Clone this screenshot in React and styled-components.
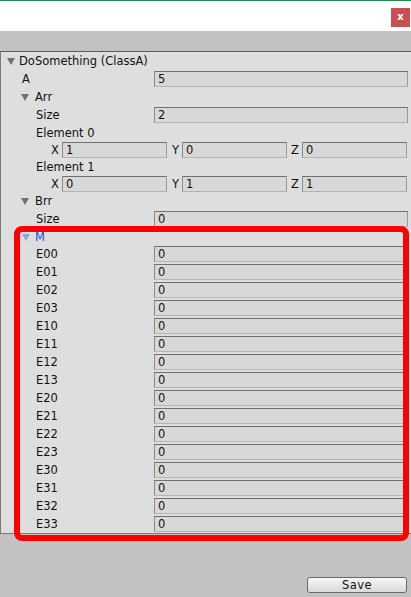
import React from 'react';
import styled, { createGlobalStyle } from 'styled-components';

const GlobalStyle = createGlobalStyle`
  html, body {
    margin: 0;
    padding: 0;
    background: #c2c2c2;
  }
  body {
    font-family: "DejaVu Sans", Verdana, sans-serif;
    font-size: 11.5px;
    color: #111;
  }
  * {
    box-sizing: border-box;
  }
`

const Window = styled.div`
  display: flex;
  flex-direction: column;
  width: 411px;
  height: 597px;
  overflow: hidden;
`

const TitleBar = styled.div`
  height: 31px;
  background: #ffffff;
  border-top: 1px solid #1d8c4c;
  display: flex;
  justify-content: flex-end;
  align-items: flex-start;
  padding: 7px 1px 0 0;
`

const CloseButton = styled.div`
  width: 19px;
  height: 19px;
  background: #c85050;
  color: #fff;
  font-weight: bold;
  font-size: 10px;
  display: flex;
  align-items: center;
  justify-content: center;
  padding-bottom: 2px;
`

const Spacer = styled.div`
  height: 20px;
`

const Panel = styled.div`
  background: #dedede;
  border-top: 1px solid #5a5a5a;
  border-left: 1px solid #7a7a7a;
  border-bottom: 1px solid #7a7a7a;
`

const Row = styled.div`
  height: ${({ h }) => h || 18}px;
  display: grid;
  grid-template-columns: 153px 254px;
  align-items: center;
`

const Label = styled.div`
  padding-left: ${({ indent }) => indent}px;
  white-space: nowrap;
`

const Field = styled.div`
  height: 16px;
  background: #d8d8d8;
  border: 1px solid;
  border-color: #707070 #9a9a9a #b4b4b4 #8a8a8a;
  padding-left: 3px;
  line-height: 14px;
  white-space: nowrap;
  overflow: hidden;
`

const Foldout = styled.div`
  height: ${({ h }) => h || 18}px;
  display: flex;
  align-items: center;
  padding-left: ${({ indent }) => indent}px;
  color: ${({ active }) => (active ? '#1d4fe6' : '#111')};
`

const Arrow = styled.span`
  width: 0;
  height: 0;
  border-left: 4px solid transparent;
  border-right: 4px solid transparent;
  border-top: 7px solid ${({ active }) => (active ? '#8aa4de' : '#727272')};
  margin-right: ${({ gap }) => gap}px;
  margin-top: 1px;
`

const VectorRow = styled.div`
  height: ${({ h }) => h || 17}px;
  display: flex;
  align-items: center;
  gap: 2px;
  padding-left: 48px;
`

const Axis = styled.div`
  display: flex;
  align-items: center;
`

const AxisLabel = styled.span`
  width: 13px;
  text-align: right;
  padding-right: 3px;
`

const AxisField = styled(Field)`
  width: 105px;
`

const Highlighted = styled.div`
  position: relative;
`

const Marker = styled.div`
  position: absolute;
  top: -2px;
  left: 13px;
  width: 395px;
  bottom: -8px;
  border: 6px solid #fe0000;
  border-radius: 8px;
  pointer-events: none;
`

const Footer = styled.div`
  margin-top: auto;
  display: flex;
  justify-content: flex-end;
  padding: 0 4px 4px 0;
`

const SaveButton = styled.button`
  width: 100px;
  height: 16px;
  padding: 0;
  font-family: inherit;
  font-size: 11.5px;
  letter-spacing: 0.5px;
  color: #111;
  border: 1px solid #6a6a6a;
  border-radius: 3px;
  background: linear-gradient(#f6f6f6, #dadada);
  line-height: 13px;
`

const Property = ({ label, value, indent = 35, h }) => (
  <Row h={h}>
    <Label indent={indent}>{label}</Label>
    <Field>{value}</Field>
  </Row>
);

const Vector = ({ x, y, z }) => (
  <VectorRow>
    {[['X', x], ['Y', y], ['Z', z]].map(([axis, v]) => (
      <Axis key={axis}>
        <AxisLabel>{axis}</AxisLabel>
        <AxisField>{v}</AxisField>
      </Axis>
    ))}
  </VectorRow>
);

const matrix = ['00', '01', '02', '03', '10', '11', '12', '13', '20', '21', '22', '23', '30', '31', '32', '33'];

const App = () => {
  return (
    <>
      <GlobalStyle />
      <Window>
        <TitleBar>
          <CloseButton>x</CloseButton>
        </TitleBar>
        <Spacer />
        <Panel>
          <Foldout indent={6}>
            <Arrow gap={4} />
            DoSomething (ClassA)
          </Foldout>
          <Property label="A" value="5" indent={21} />
          <Foldout indent={20}>
            <Arrow gap={6} />
            Arr
          </Foldout>
          <Property label="Size" value="2" />
          <Foldout indent={35} h={17}>Element 0</Foldout>
          <Vector x="1" y="0" z="0" />
          <Foldout indent={35} h={17}>Element 1</Foldout>
          <Vector x="0" y="1" z="1" />
          <Foldout indent={20}>
            <Arrow gap={6} />
            Brr
          </Foldout>
          <Property label="Size" value="0" />
          <Highlighted>
            <Foldout indent={21} h={17} active>
              <Arrow gap={5} active />
              M
            </Foldout>
            {matrix.map((k) => (
              <Property key={k} label={`E${k}`} value="0" />
            ))}
            <Marker />
          </Highlighted>
        </Panel>
        <Footer>
          <SaveButton>Save</SaveButton>
        </Footer>
      </Window>
    </>
  );
};

export default App;
